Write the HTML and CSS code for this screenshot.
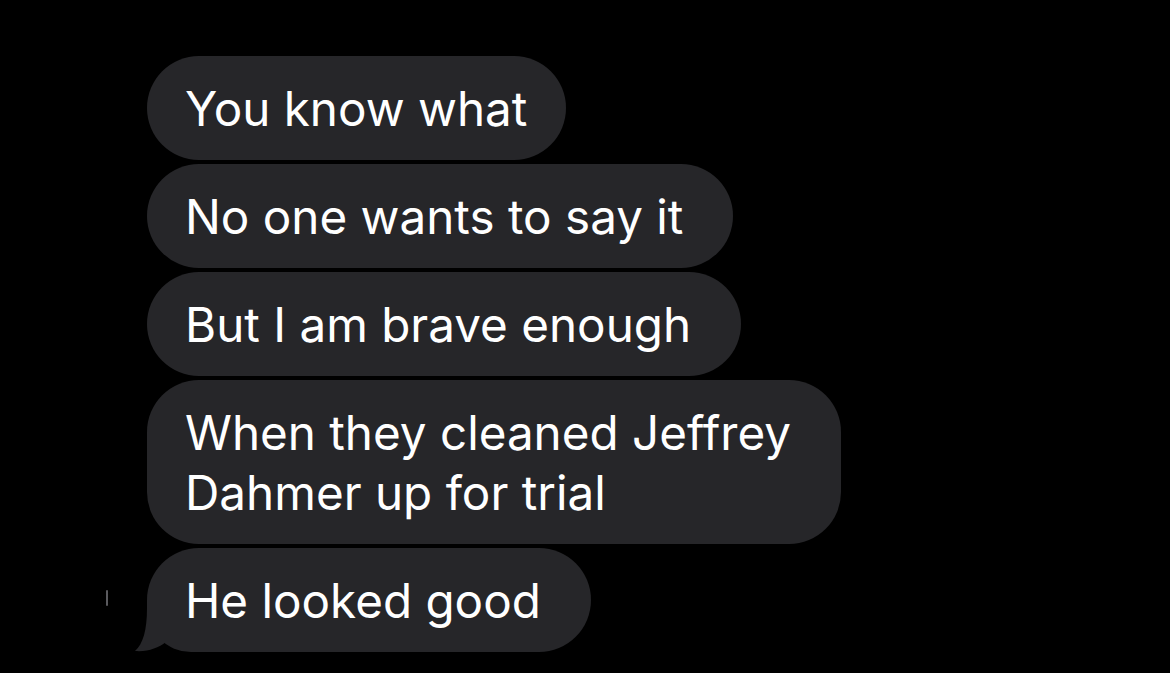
FILE: index.html
```html
<!DOCTYPE html>
<html lang="en">
<head>
    <meta charset="utf-8">
    <title>Messages</title>
    <link rel="stylesheet" href="styles.css">
</head>
<body>
<div class="thread">
    <div class="bubble first">You know what</div>
    <div class="bubble">No one wants to say it</div>
    <div class="bubble">But I am brave enough</div>
    <div class="bubble">When they cleaned Jeffrey<br>Dahmer up for trial</div>
    <div class="bubble last">
        <span class="edge"></span>
        He looked good
        <svg class="tail" width="40" height="44" viewBox="0 0 40 44">
            <path d="M13 0 C13 22 9 36 1 43 C14 44 24 40 32 34 L40 34 L40 0 Z" fill="#262629"/>
        </svg>
    </div>
</div>
</body>
</html>
```

FILE: styles.css
```css
body {
    margin: 0;
    background: #000;
    font: 47.6px Inter, 'Liberation Sans', sans-serif;
    color: #fff;
}

.thread {
    display: flex;
    flex-direction: column;
    align-items: flex-start;
    gap: 4px;
    padding: 56px 0 0 147px;
}

.bubble {
    position: relative;
    padding: 23px 50px 21px 38px;
    line-height: 60px;
    background: #262629;
    border-radius: 52px;
}

.bubble.first {
    padding-right: 39px;
}

.bubble.last {
    border-bottom-left-radius: 44px;
}

.tail {
    position: absolute;
    left: -13px;
    bottom: 0;
}

.edge {
    position: absolute;
    left: -41px;
    top: 42px;
    width: 2px;
    height: 16px;
    border-radius: 1px;
    background: #5a5a5e;
}
```
